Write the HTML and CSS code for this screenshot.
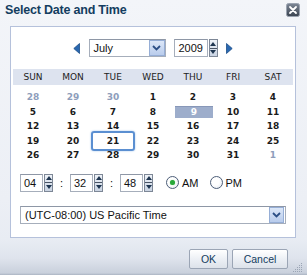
FILE: index.html
```html
<!DOCTYPE html>
<html>
<head>
<meta charset="utf-8">
<link rel="stylesheet" href="styles.css">
</head>
<body>
<div class="dialog">
  <div class="titlebar">
    <span class="title">Select Date and Time</span>
    <span class="close">
      <svg width="14" height="14" viewBox="0 0 14 14">
        <defs>
          <linearGradient id="cg" x1="0" y1="0" x2="0" y2="1">
            <stop offset="0" stop-color="#7d8796"/>
            <stop offset="1" stop-color="#3a4350"/>
          </linearGradient>
        </defs>
        <rect x="0.5" y="0.5" width="13" height="13" rx="2" fill="url(#cg)" stroke="#9aa3b0"/>
        <path d="M4 4 L10 10 M10 4 L4 10" stroke="#fff" stroke-width="1.8" stroke-linecap="round"/>
      </svg>
    </span>
  </div>

  <div class="panel">
    <div class="nav">
      <svg class="arrow" width="7" height="11" viewBox="0 0 7 11"><path d="M6.5 0.5 L0.8 5.5 L6.5 10.5 Z" fill="#2a68b0" stroke="#1a4c88" stroke-width="0.8"/></svg>
      <div class="select month">
        <span class="value">July</span>
        <span class="drop"><svg width="9" height="6" viewBox="0 0 9 6"><path d="M1 1 L4.5 4.5 L8 1" fill="none" stroke="#2c4f86" stroke-width="1.8"/></svg></span>
      </div>
      <div class="spinfield year">
        <span class="field">2009</span>
        <span class="spinner"><span class="up"></span><span class="down"></span></span>
      </div>
      <svg class="arrow" width="7" height="11" viewBox="0 0 7 11"><path d="M0.5 0.5 L6.2 5.5 L0.5 10.5 Z" fill="#2a68b0" stroke="#1a4c88" stroke-width="0.8"/></svg>
    </div>

    <div class="cal">
      <div class="head">
        <span>SUN</span><span>MON</span><span>TUE</span><span>WED</span><span>THU</span><span>FRI</span><span>SAT</span>
      </div>
      <div class="days">
        <span class="other">28</span><span class="other">29</span><span class="other">30</span><span>1</span><span>2</span><span>3</span><span>4</span>
        <span>5</span><span>6</span><span>7</span><span>8</span><span class="sel">9</span><span>10</span><span>11</span>
        <span>12</span><span>13</span><span>14</span><span>15</span><span>16</span><span>17</span><span>18</span>
        <span>19</span><span>20</span><span class="today">21</span><span>22</span><span>23</span><span>24</span><span>25</span>
        <span>26</span><span>27</span><span>28</span><span>29</span><span>30</span><span>31</span><span class="other">1</span>
      </div>
    </div>

    <div class="time">
      <div class="spinfield tf">
        <span class="field">04</span>
        <span class="spinner"><span class="up"></span><span class="down"></span></span>
      </div>
      <span class="colon">:</span>
      <div class="spinfield tf">
        <span class="field">32</span>
        <span class="spinner"><span class="up"></span><span class="down"></span></span>
      </div>
      <span class="colon">:</span>
      <div class="spinfield tf">
        <span class="field">48</span>
        <span class="spinner"><span class="up"></span><span class="down"></span></span>
      </div>
      <label class="radio on"><span class="dot"></span>AM</label>
      <label class="radio"><span class="dot"></span>PM</label>
    </div>

    <div class="select tz">
      <span class="value">(UTC-08:00) US Pacific Time</span>
      <span class="drop"><svg width="9" height="6" viewBox="0 0 9 6"><path d="M1 1 L4.5 4.5 L8 1" fill="none" stroke="#2c4f86" stroke-width="1.8"/></svg></span>
    </div>
  </div>

  <div class="footer">
    <button class="btn ok">OK</button>
    <button class="btn cancel">Cancel</button>
    <svg class="grip" width="10" height="10" viewBox="0 0 10 10">
      <g fill="#9aa4b4">
        <rect x="8" y="0" width="1" height="1"/>
        <rect x="6" y="2" width="1" height="1"/><rect x="8" y="2" width="1" height="1"/>
        <rect x="4" y="4" width="1" height="1"/><rect x="6" y="4" width="1" height="1"/><rect x="8" y="4" width="1" height="1"/>
        <rect x="2" y="6" width="1" height="1"/><rect x="4" y="6" width="1" height="1"/><rect x="6" y="6" width="1" height="1"/><rect x="8" y="6" width="1" height="1"/>
        <rect x="0" y="8" width="1" height="1"/><rect x="2" y="8" width="1" height="1"/><rect x="4" y="8" width="1" height="1"/><rect x="6" y="8" width="1" height="1"/><rect x="8" y="8" width="1" height="1"/>
      </g>
    </svg>
  </div>
</div>
</body>
</html>
```
FILE: styles.css
```css
* { box-sizing: border-box; }
html, body { margin: 0; padding: 0; }
body {
  width: 307px;
  height: 275px;
  overflow: hidden;
  font-family: "Liberation Sans", Arial, sans-serif;
}
.dialog {
  width: 307px;
  height: 275px;
  background: linear-gradient(to bottom, #f3f5f9 0px, #eceff5 200px, #e8ecf3 240px, #dfe4ed 258px, #c9d0dc 273px, #aab3c2 275px);
  display: flex;
  flex-direction: column;
}
.titlebar {
  display: flex;
  align-items: center;
  justify-content: space-between;
  height: 26px;
  padding: 0 7px 6px 5px;
}
.title {
  font-weight: bold;
  font-size: 12.5px;
  color: #133d60;
  letter-spacing: -0.2px;
}
.close { display: block; width: 14px; height: 14px; }
.close svg { display: block; }

.panel {
  margin: 0 11px 0 10px;
  height: 212px;
  background: #fff;
  border: 1px solid #b5c1db;
  padding: 12px 9px 0 9px;
  display: flex;
  flex-direction: column;
}
.nav {
  display: flex;
  align-items: center;
  justify-content: center;
  height: 18px;
  padding-right: 1px;
}
.arrow { display: block; }
.nav .month { margin-left: 9px; margin-right: 8px; }
.nav .year { margin-right: 8px; }

.select {
  display: flex;
  align-items: center;
  height: 18px;
  background: #fff;
  border: 1px solid #a6aebb;
  border-top-color: #8e97a6;
  font-size: 11px;
  color: #111;
  padding-left: 4px;
}
.select .value { flex: 1; white-space: nowrap; }
.select .drop {
  width: 16px;
  height: 16px;
  margin-right: 0;
  display: flex;
  align-items: center;
  justify-content: center;
  background: linear-gradient(to bottom, #dce7f8, #b9ccec);
  border: 1px solid #96aed6;
}
.select .drop svg { display: block; }
.month { width: 77px; }

.spinfield { display: flex; height: 18px; }
.spinfield .field {
  display: flex;
  align-items: center;
  border: 1px solid #a6aebb;
  border-top-color: #8e97a6;
  background: #fff;
  font-size: 11px;
  color: #111;
  padding-left: 4px;
}
.year .field { width: 34px; }
.tf .field { width: 23px; padding-left: 3px; }
.spinner {
  width: 9px;
  height: 18px;
  display: flex;
  flex-direction: column;
  border: 1px solid #7d8796;
  background: linear-gradient(to bottom, #eef2f8, #c9d3e2);
  margin-left: 1px;
}
.spinner .up, .spinner .down {
  flex: 1;
  position: relative;
}
.spinner .up { border-bottom: 1px solid #4a5566; }
.spinner .up::after, .spinner .down::after {
  content: "";
  position: absolute;
  left: 50%;
  top: 50%;
  margin-left: -3px;
  border-left: 3px solid transparent;
  border-right: 3px solid transparent;
}
.spinner .up::after { border-bottom: 4px solid #1e3550; margin-top: -2px; }
.spinner .down::after { border-top: 4px solid #1e3550; margin-top: -2px; }

.cal { margin: 12px -7px 0 -7px; }
.head {
  display: grid;
  grid-template-columns: repeat(7, 40px);
  height: 16px;
  background: #dde3ef;
  align-items: center;
  font-family: "DejaVu Sans", Verdana, sans-serif;
  font-size: 9px;
  color: #222;
}
.head span { text-align: center; }
.days {
  display: grid;
  grid-template-columns: repeat(7, 40px);
  grid-auto-rows: 14.5px;
  margin-top: 5px;
  font-family: "DejaVu Sans", Verdana, sans-serif;
  font-weight: bold;
  font-size: 9px;
  color: #1a1a1a;
}
.days span {
  display: flex;
  align-items: center;
  justify-content: center;
  position: relative;
}
.days .other { color: #8e9dbb; }
.days .sel {
  color: #fff;
  background: #9dadcb;
  margin: 1px 0 1px 2px;
  border-top: 1px solid #8797b8;
}
.days .today::before {
  content: "";
  position: absolute;
  left: -2px;
  right: -2px;
  top: -3px;
  bottom: -3px;
  border: 2px solid #5b8fd1;
  border-radius: 3px;
  box-shadow: 0 0 2px #9dc0ea;
}

.time {
  display: flex;
  align-items: center;
  margin-top: 11px;
  height: 18px;
}
.colon {
  width: 17px;
  text-align: center;
  font-size: 11px;
  color: #111;
}
.radio {
  display: flex;
  align-items: center;
  font-size: 11px;
  color: #111;
}
.radio:first-of-type { margin-left: 13px; }
.radio + .radio { margin-left: 11px; }
.radio .dot {
  width: 13px;
  height: 13px;
  border-radius: 50%;
  border: 1px solid #4d5e78;
  background: radial-gradient(circle at 40% 40%, #fff 40%, #dfe5ef);
  margin-right: 3px;
  position: relative;
}
.radio.on .dot::after {
  content: "";
  position: absolute;
  left: 3px;
  top: 3px;
  width: 5px;
  height: 5px;
  border-radius: 50%;
  background: #29a83a;
  box-shadow: 0 0 1px #7ad27f;
}

.tz { margin-top: 14px; width: 266px; padding-left: 4px; }
.tz .drop { margin-right: 1px; width: 15px; }

.footer {
  display: flex;
  align-items: flex-start;
  justify-content: flex-end;
  padding-top: 11px;
  padding-right: 4px;
  position: relative;
}
.btn {
  height: 20px;
  font-family: "Liberation Sans", Arial, sans-serif;
  font-size: 10.5px;
  color: #133d60;
  background: linear-gradient(to bottom, #ffffff, #e9edf3 60%, #dde2ea);
  border: 1px solid #9ba5b5;
  border-radius: 2px;
  padding: 0;
  margin: 0;
}
.ok { width: 39px; }
.cancel { width: 56px; margin-left: 4px; }
.grip { margin-top: 14px; margin-left: 5px; display: block; }
```
